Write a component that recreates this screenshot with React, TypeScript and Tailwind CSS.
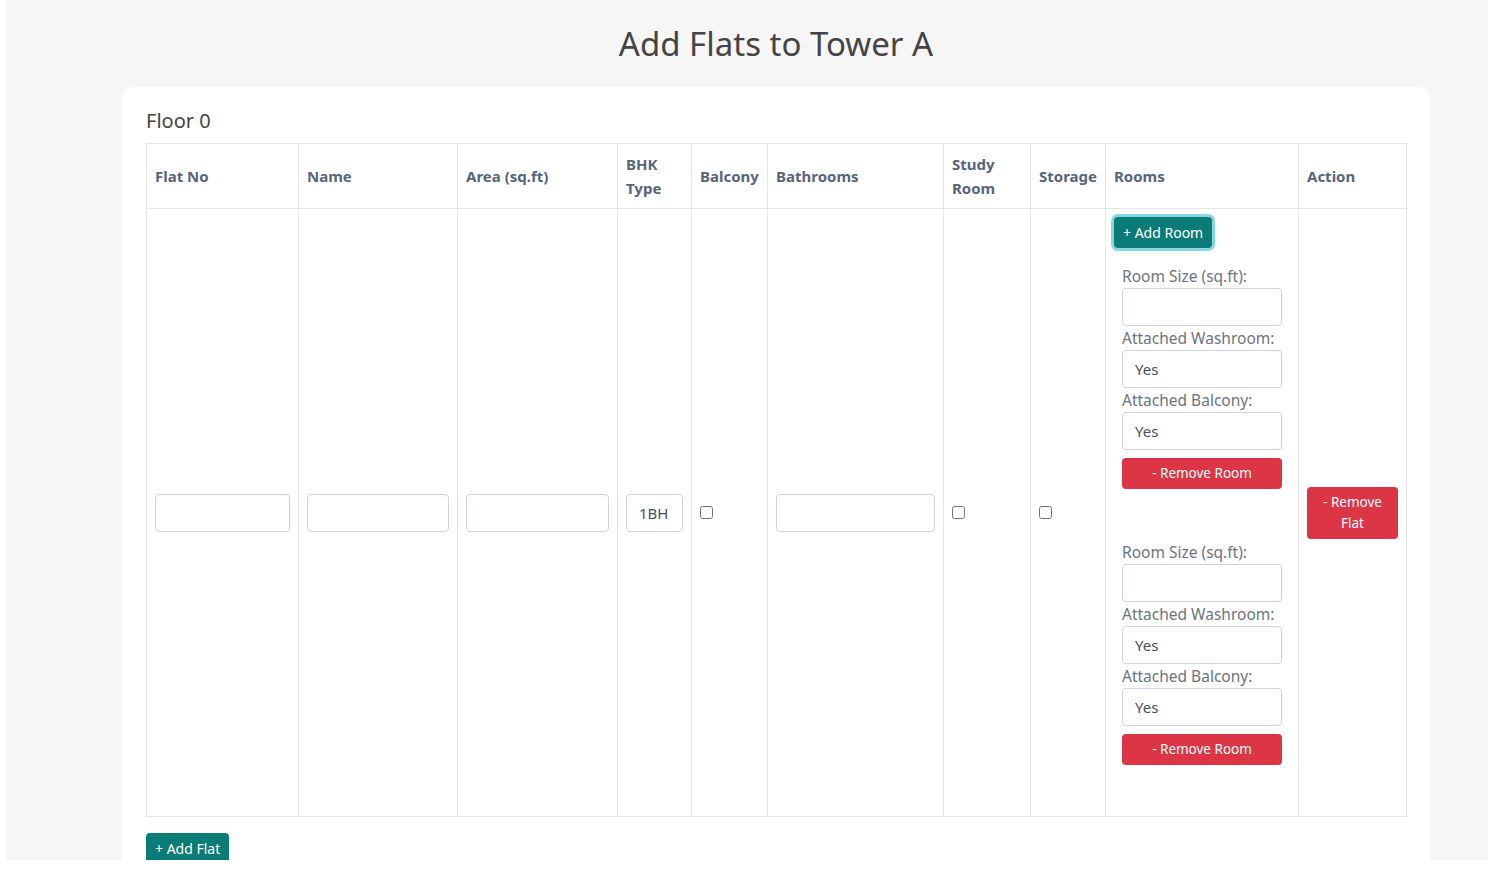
import React from 'react';

const font = { fontFamily: '"Noto Sans", Lato, sans-serif' };

const cols = [
  { label: 'Flat No', w: 152 },
  { label: 'Name', w: 159 },
  { label: 'Area (sq.ft)', w: 160 },
  { label: 'BHK Type', w: 74 },
  { label: 'Balcony', w: 76 },
  { label: 'Bathrooms', w: 176 },
  { label: 'Study Room', w: 87 },
  { label: 'Storage', w: 75 },
  { label: 'Rooms', w: 193 },
  { label: 'Action', w: 108 },
];

const TextBox: React.FC<{ value?: string }> = ({ value }) => (
  <div className="h-[38px] w-full rounded-[4px] border border-[#ced4da] bg-white px-3 text-[15px] leading-[36px] text-[#495057] overflow-hidden whitespace-nowrap">
    {value}
  </div>
);

const Check: React.FC = () => (
  <input type="checkbox" className="block h-[13px] w-[13px] m-0 accent-[#0b7b78]" />
);

const RoomBlock: React.FC = () => (
  <div className="mx-2 mt-4 mb-[51px] flex flex-col">
    <label className="text-[15.5px] leading-[24px] text-[#6c757d]">Room Size (sq.ft):</label>
    <TextBox />
    <label className="text-[15.5px] leading-[24px] text-[#6c757d]">Attached Washroom:</label>
    <TextBox value="Yes" />
    <label className="text-[15.5px] leading-[24px] text-[#6c757d]">Attached Balcony:</label>
    <TextBox value="Yes" />
    <button className="mt-2 h-[31px] w-full rounded-[4px] bg-[#dc3545] text-[13.5px] text-white">
      - Remove Room
    </button>
  </div>
);

export default function App() {
  return (
    <div className="h-[876px] w-full overflow-hidden bg-white" style={font}>
      <div className="ml-[6px] h-[860px] overflow-hidden bg-[#f6f6f6]">
        <div className="ml-[116px] w-[1308px]">
          {/* Title */}
          <div className="flex h-[87px] items-center justify-center">
            <h1 className="text-[33px] font-normal text-[#444]">Add Flats to Tower A</h1>
          </div>

          {/* Card */}
          <div className="rounded-[12px] bg-white px-6 pt-[19px] pb-6">
            <h2 className="mb-[7px] text-[20px] leading-[30px] text-[#444]">Floor 0</h2>

            <table className="w-[1260px] table-fixed border-collapse border border-[#e6e6e6]">
              <colgroup>
                {cols.map((c) => (
                  <col key={c.label} style={{ width: c.w }} />
                ))}
              </colgroup>
              <thead>
                <tr className="h-[65px]">
                  {cols.map((c) => (
                    <th
                      key={c.label}
                      className="border border-[#e6e6e6] px-2 py-2 text-left align-middle text-[15px] font-bold leading-[24px] text-[#56657a]"
                    >
                      {c.label === 'BHK Type' ? (
                        <>BHK<br />Type</>
                      ) : c.label === 'Study Room' ? (
                        <>Study<br />Room</>
                      ) : (
                        c.label
                      )}
                    </th>
                  ))}
                </tr>
              </thead>
              <tbody>
                <tr>
                  <td className="border border-[#e6e6e6] p-2 align-middle"><TextBox /></td>
                  <td className="border border-[#e6e6e6] p-2 align-middle"><TextBox /></td>
                  <td className="border border-[#e6e6e6] p-2 align-middle"><TextBox /></td>
                  <td className="border border-[#e6e6e6] p-2 align-middle"><TextBox value="1BH" /></td>
                  <td className="border border-[#e6e6e6] p-2 align-middle"><Check /></td>
                  <td className="border border-[#e6e6e6] p-2 align-middle"><TextBox /></td>
                  <td className="border border-[#e6e6e6] p-2 align-middle"><Check /></td>
                  <td className="border border-[#e6e6e6] p-2 align-middle"><Check /></td>
                  <td className="border border-[#e6e6e6] px-2 pt-2 pb-0 align-top">
                    <button className="h-[31px] rounded-[4px] bg-[#0b7b78] px-[9px] text-[14px] text-white ring-[3px] ring-[#86d6e6]">
                      + Add Room
                    </button>
                    <RoomBlock />
                    <RoomBlock />
                  </td>
                  <td className="border border-[#e6e6e6] p-2 align-middle">
                    <button className="w-full rounded-[4px] bg-[#dc3545] px-3 py-[5px] text-[13.5px] leading-[21px] text-white">
                      - Remove Flat
                    </button>
                  </td>
                </tr>
              </tbody>
            </table>

            <button className="mt-4 h-[31px] rounded-[4px] bg-[#0b7b78] px-[9px] text-[14px] text-white">
              + Add Flat
            </button>
          </div>
        </div>
      </div>
    </div>
  );
}
